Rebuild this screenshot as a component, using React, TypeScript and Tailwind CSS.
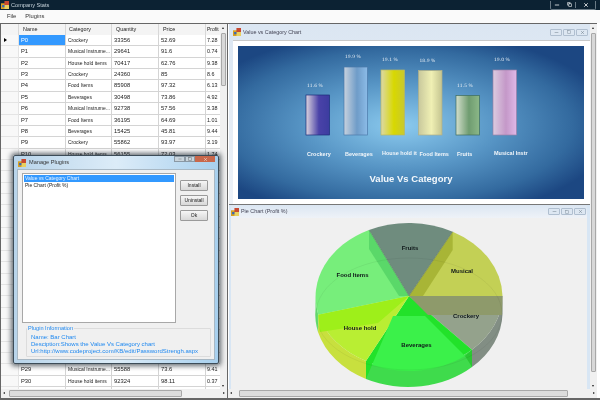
import { Copy, Minus, Square, X } from "lucide-react";

type Row = { name: string; category: string; qty: string; price: string; profit: string };

const topRows: Row[] = [
  { name: "P0", category: "Crockery", qty: "33356", price: "52.69", profit: "7.28" },
  { name: "P1", category: "Musical Instrume...", qty: "29641", price: "91.6", profit: "0.74" },
  { name: "P2", category: "House hold items", qty: "70417", price: "62.76", profit: "9.38" },
  { name: "P3", category: "Crockery", qty: "24360", price: "85", profit: "8.6" },
  { name: "P4", category: "Food Items", qty: "85908", price: "97.32", profit: "6.13" },
  { name: "P5", category: "Beverages", qty: "30498", price: "73.86", profit: "4.92" },
  { name: "P6", category: "Musical Instrume...", qty: "92738", price: "57.56", profit: "3.38" },
  { name: "P7", category: "Food Items", qty: "36195", price: "64.69", profit: "1.01" },
  { name: "P8", category: "Beverages", qty: "15425", price: "45.81", profit: "9.44" },
  { name: "P9", category: "Crockery", qty: "55862", price: "93.97", profit: "3.19" },
  { name: "P10", category: "House hold items", qty: "56155", price: "72.03", profit: "1.74" },
];

const blankRow: Row = { name: "", category: "", qty: "", price: "", profit: "" };

const bottomRows: Row[] = [
  { name: "P29", category: "Musical Instrume...", qty: "55588", price: "73.6", profit: "9.41" },
  { name: "P30", category: "House hold items", qty: "92324", price: "98.11", profit: "0.37" },
];

// rows 11-28 sit behind the dialog
const rows: Row[] = [...topRows, ...Array.from({ length: 18 }, () => blankRow), ...bottomRows, blankRow];

const bars = [
  { id: "crockery", x: 307, y: 95, label: "11.6 %", ly: 87, name: "Crockery", ny: 156, stroke: "#1c2c78", stops: ["#dcd4de", "#4a42a8", "#3c3ca0"] },
  { id: "beverages", x: 345, y: 67, label: "19.9 %", ly: 58, name: "Beverages", ny: 156, stroke: "#4a78a8", stops: ["#c8d2de", "#6f9cc8", "#8cbce8"] },
  { id: "household", x: 382, y: 70, label: "19.1 %", ly: 61, name: "House hold it", ny: 155, stroke: "#b8b860", stops: ["#dcd8a8", "#d8d800", "#c8c830"] },
  { id: "food", x: 419.5, y: 70.5, label: "18.9 %", ly: 62, name: "Food Items", ny: 156, stroke: "#b0b088", stops: ["#c8c89c", "#f0f0b4", "#c4c490"] },
  { id: "fruits", x: 457, y: 95.5, label: "11.5 %", ly: 87, name: "Fruits", ny: 156, stroke: "#3c6c5c", stops: ["#d4dfcc", "#6f9c70", "#8cb888"] },
  { id: "musical", x: 494, y: 70, label: "19.0 %", ly: 61, name: "Musical Instr", ny: 155, stroke: "#9a80a8", stops: ["#dccce0", "#c498c8", "#e0b8e8"] },
];

function AppIcon() {
  return (
    <svg width="8" height="8" viewBox="0 0 7 7" className="shrink-0">
      <rect x="0" y="2" width="3.5" height="5" fill="#d8a020" />
      <rect x="3" y="0" width="4" height="4" fill="#c84830" />
      <rect x="3" y="3.5" width="4" height="3.5" fill="#e8d060" />
      <rect x="1" y="3.5" width="2" height="2" fill="#3868b8" />
    </svg>
  );
}

function ChildControls() {
  return (
    <div className="ml-auto flex gap-[1px] text-[#5a6a7a]">
      <div className="flex h-[7px] w-[12px] items-center justify-center rounded-[1px] border border-[#b0bfd0] bg-[#dde7f2]">
        <Minus size={5} />
      </div>
      <div className="flex h-[7px] w-[12px] items-center justify-center rounded-[1px] border border-[#b0bfd0] bg-[#dde7f2]">
        <Square size={4} />
      </div>
      <div className="flex h-[7px] w-[12px] items-center justify-center rounded-[1px] border border-[#b0bfd0] bg-[#dde7f2]">
        <X size={5} />
      </div>
    </div>
  );
}

function ScrollV({ top, thumb }: { top: number; thumb: number }) {
  return (
    <div className="relative flex w-[7px] shrink-0 flex-col bg-[#f0f0f0]">
      <div className="absolute left-[1px] w-[5px] rounded-[1px] border border-[#a8a8a8] bg-[#d8d8d8]" style={{ top, height: thumb }} />
      <div className="absolute top-[3px] left-[2px] h-0 w-0 border-x-[1.5px] border-b-[2px] border-x-transparent border-b-[#222]" />
      <div className="absolute bottom-[2px] left-[2px] h-0 w-0 border-x-[1.5px] border-t-[2px] border-x-transparent border-t-[#222]" />
    </div>
  );
}

function ScrollH({ left, thumb }: { left: number; thumb: number }) {
  return (
    <div className="relative h-[9px] shrink-0 bg-[#f0f0f0]">
      <div className="absolute top-[1px] h-[7px] rounded-[1px] border border-[#a8a8a8] bg-[#dcdcdc]" style={{ left, width: thumb }} />
      <div className="absolute top-[3px] left-[2px] h-0 w-0 border-y-[1.5px] border-r-[2px] border-y-transparent border-r-[#222]" />
      <div className="absolute top-[3px] right-[2px] h-0 w-0 border-y-[1.5px] border-l-[2px] border-y-transparent border-l-[#222]" />
    </div>
  );
}

function BarChart() {
  return (
    <svg viewBox="239 46 346 153" className="block h-[153px] w-[346px]">
      <defs>
        <radialGradient id="panelBg" cx="0.47" cy="0.52" r="0.62">
          <stop offset="0" stopColor="#8ccbef" />
          <stop offset="0.45" stopColor="#5795c5" />
          <stop offset="0.8" stopColor="#336a9f" />
          <stop offset="1" stopColor="#1c4782" />
        </radialGradient>
        {bars.map((b) => (
          <linearGradient key={b.id} id={`bar-${b.id}`} x1="0" x2="1" y1="0" y2="0">
            <stop offset="0" stopColor={b.stops[0]} />
            <stop offset="0.55" stopColor={b.stops[1]} />
            <stop offset="1" stopColor={b.stops[2]} />
          </linearGradient>
        ))}
      </defs>
      <rect x="239" y="46" width="346" height="153" fill="url(#panelBg)" />
      {bars.map((b) => (
        <g key={b.id}>
          <rect x={b.x} y={b.y} width="23.5" height={135 - b.y} fill={`url(#bar-${b.id})`} stroke={b.stroke} strokeWidth="0.7" />
          <text x={b.x + 1} y={b.ly} fontSize="4.5" fill="#e8eef5" fontFamily="'DejaVu Serif', serif">{b.label}</text>
          <text x={b.x + 1} y={b.ny} fontSize="5.5" fontWeight="700" fill="#f2f6fa" fontFamily="'Liberation Sans', sans-serif">{b.name}</text>
        </g>
      ))}
      <text x="412" y="181.5" textAnchor="middle" fontSize="9.5" fontWeight="700" fill="#f4f8fc" fontFamily="'Liberation Sans', sans-serif">Value Vs Category</text>
    </svg>
  );
}

function PieChart() {
  return (
    <svg viewBox="309 219 200 169" className="block h-[169px] w-[200px]">
      {/* side walls */}
      <path d="M318.3 315.7 A93.5 74 0 0 0 366 362 L366 380 A93.5 74 0 0 1 318 333Z" fill="#c8e03e" />
      <path d="M366 362 A93.5 74 0 0 0 472 350.7 L472 368 A93.5 74 0 0 1 366 380Z" fill="#3fdb4c" />
      <path d="M472 350.7 A93.5 74 0 0 0 502.5 297 L502.5 315 A93.5 74 0 0 1 472 368Z" fill="#828e84" />
      <path d="M315.5 297 A93.5 74 0 0 0 318.3 315.7 L318 333 A93.5 74 0 0 1 315.5 310Z" fill="#66dd70" />
      {/* top wedges */}
      <path d="M409 297 L369 231 A93.5 74 0 0 1 452.7 232.7Z" fill="#6f8c7e" />
      <path d="M409 297 L452.7 232.7 A93.5 74 0 0 1 502.5 297Z" fill="#c3d055" />
      <path d="M409 297 L502.5 297 A93.5 74 0 0 1 472 350.7Z" fill="#94a28c" />
      <path d="M409 297 L472 350.7 A93.5 74 0 0 1 366 362Z" fill="#22e22a" />
      <path d="M409 297 L366 362 A93.5 74 0 0 1 318.3 315.7Z" fill="#b9ee33" />
      <path d="M409 297 L318.3 315.7 A93.5 74 0 0 1 369 231Z" fill="#77ee7b" />
      {/* inner walls seen through the top */}
      <path d="M409 297 L452.7 232.7 L452.7 251 L423 297Z" fill="#a8b536" />
      <path d="M409 297 L369 231 L369 250 L399 297Z" fill="#5ad869" />
      <path d="M409 297 L502.5 297 L502 316 L428 316Z" fill="#8e9a6b" />
      <path d="M409 297 L318.3 315.7 L320 333 L378 324Z" fill="#9eef1a" />
      <path d="M393 317 L425 317 L465 357 A93.5 74 0 0 1 372 366Z" fill="#3bf14a" />
      <path d="M366 362 L366 380 L372 366 L372 362Z" fill="#22e22a" />
      <path d="M465 357 L472 350.7 L472 368Z" fill="#2ac832" />
      {/* edges */}
      <path d="M369 231 L409 297 L452.7 232.7" fill="none" stroke="#5f7468" strokeWidth="0.5" />
      <ellipse cx="409" cy="315" rx="93" ry="56" fill="none" stroke="#000" strokeOpacity="0.1" strokeWidth="0.5" />
      <g fontSize="6" fontWeight="700" textAnchor="middle" fill="#10181a" fontFamily="'Liberation Sans', sans-serif">
        <text x="410" y="251">Fruits</text>
        <text x="462" y="274">Musical</text>
        <text x="466" y="319">Crockery</text>
        <text x="352.5" y="278">Food Items</text>
        <text x="360" y="330.5">House hold</text>
        <text x="416.5" y="348">Beverages</text>
      </g>
    </svg>
  );
}

function DataGrid() {
  const cols = "grid grid-cols-[18px_47px_46px_47px_47px_14px]";
  return (
    <div className="min-w-0 flex-1 overflow-hidden bg-white">
      <div className={`${cols} h-[11px] bg-[#f4f4f4] text-[5.4px]`}>
        <div className="border-r border-[#d8d8d8]" />
        <div className="border-r border-[#d8d8d8] pl-[4px] leading-[10px]">Name</div>
        <div className="border-r border-[#d8d8d8] pl-[3px] leading-[10px]">Category</div>
        <div className="border-r border-[#d8d8d8] pl-[4px] leading-[10px]">Quantity</div>
        <div className="border-r border-[#d8d8d8] pl-[4px] leading-[10px]">Price</div>
        <div className="pl-[1px] text-[5px] leading-[10px] whitespace-nowrap">Profit</div>
      </div>
      {rows.map((r, i) => (
        <div key={i} className={`${cols} h-[11.37px] text-[5.8px] leading-[10px]`}>
          <div className="flex items-center border-r border-b border-[#e4e4e4] bg-[#f8f8f8] pl-[3px]">
            {i === 0 && <div className="h-0 w-0 border-y-[2px] border-l-[3px] border-y-transparent border-l-black" />}
          </div>
          <div className={`border-r border-b border-[#d4d4d4] pl-[2px] ${i === 0 ? "bg-[#3399ff] text-white" : ""}`}>{r.name}</div>
          <div className="overflow-hidden border-r border-b border-[#d4d4d4] pl-[2px] text-[5px] whitespace-nowrap">{r.category}</div>
          <div className="border-r border-b border-[#d4d4d4] pl-[2px]">{r.qty}</div>
          <div className="border-r border-b border-[#d4d4d4] pl-[2px]">{r.price}</div>
          <div className="overflow-hidden border-b border-[#d4d4d4] pl-[1px] text-[5.4px]">{r.profit}</div>
        </div>
      ))}
    </div>
  );
}

function ManagePlugins() {
  return (
    <div className="absolute top-[155px] left-[13px] flex h-[209px] w-[206px] flex-col rounded-[2px] border border-[#3c4c58] bg-gradient-to-r from-[#b8d4ea] via-[#dcecf8] to-[#a8d0ee] px-[3px] pb-[3px] shadow-[0_0_5px_2px_rgba(20,30,40,0.65)]">
      <div className="flex h-[13px] shrink-0 items-center gap-[3px] pl-[1px]">
        <AppIcon />
        <span className="text-[5.6px] text-[#333]">Manage Plugins</span>
        <div className="ml-auto flex self-start text-[#444]">
          <div className="flex h-[6px] w-[11px] items-center justify-center border border-[#8a98a4] bg-[#c8d4dc]">
            <Minus size={4} />
          </div>
          <div className="flex h-[6px] w-[10px] items-center justify-center border border-[#8a98a4] bg-[#c8d4dc]">
            <Square size={4} />
          </div>
          <div className="flex h-[6px] w-[20px] items-center justify-center bg-[#c8684c] text-white">
            <X size={5} />
          </div>
        </div>
      </div>
      <div className="flex min-h-0 flex-1 flex-col border border-[#a8b8c4] bg-[#f0f0f0] px-[4px] pt-[3px] pb-[2px] text-[5px]">
        <div className="flex h-[150px] shrink-0 gap-[3px]">
          <div className="w-[154px] border border-[#a8a8a8] bg-white p-[1px]">
            <div className="h-[7px] bg-[#3399ff] pl-[1px] leading-[7px] text-[#e8f4ff]">Value vs Category Chart</div>
            <div className="pl-[1px] leading-[7px]">Pie Chart (Profit %)</div>
          </div>
          <div className="flex flex-1 flex-col gap-[4px] pt-[7px] pr-[2px] pl-[1px]">
            {["Install", "Uninstall", "Ok"].map((label) => (
              <div key={label} className="flex h-[11px] items-center justify-center rounded-[1px] border border-[#9a9a9a] bg-gradient-to-b from-[#f6f6f6] to-[#d8d8d8]">
                {label}
              </div>
            ))}
          </div>
        </div>
        <div className="relative mt-[5px] -mr-[1px] ml-[4px] flex-1 rounded-[1px] border border-[#dcdcdc] pt-[5px] pl-[4px] text-[6px] leading-[6.8px] text-[#1e88f0]">
          <div className="absolute -top-[4px] left-[0px] bg-[#f0f0f0] px-[1px] text-[5.6px]">Plugin Information</div>
          <div>Name: Bar Chart</div>
          <div>Desciption:Shows the Value Vs Category chart</div>
          <div>Url:http://www.codeproject.com/KB/edit/PasswordStrengh.aspx</div>
        </div>
      </div>
    </div>
  );
}

export default function App() {
  return (
    <div className="relative flex h-[400px] w-[600px] flex-col overflow-hidden bg-white font-['Liberation_Sans',sans-serif] text-[6px] text-[#1c1c1c] blur-[0.3px]">
      {/* main title bar */}
      <div className="flex h-[10px] shrink-0 items-center gap-[2px] bg-[#0c2233] pl-[1px]">
        <AppIcon />
        <span className="text-[5.6px] text-[#c8d4dc]">Company Stats</span>
        <div className="mr-[4px] ml-auto flex h-[9px] items-center rounded-b-[2px] border border-t-0 border-[#6a7a86] text-white">
          <div className="flex w-[12px] justify-center"><Minus size={6} strokeWidth={3} /></div>
          <div className="flex w-[12px] justify-center"><Copy size={5} strokeWidth={3} /></div>
          <div className="flex w-[20px] justify-center border-l border-[#6a7a86]"><X size={6} strokeWidth={3} /></div>
        </div>
      </div>

      {/* menu */}
      <div className="flex h-[13px] shrink-0 items-center gap-[9px] bg-[#fafafa] pl-[7px] text-[5.8px] text-[#333]">
        <span>File</span>
        <span>Plugins</span>
      </div>

      <div className="flex min-h-0 flex-1">
        {/* data grid side */}
        <div className="flex w-[228px] shrink-0 flex-col border-t border-r border-l border-[#666]">
          <div className="flex min-h-0 flex-1">
            <DataGrid />
            <ScrollV top={9} thumb={53} />
          </div>
          <ScrollH left={8} thumb={173} />
        </div>

        {/* child windows side */}
        <div className="flex w-[369px] shrink-0 flex-col border-t border-[#666]">
          <div className="flex min-h-0 flex-1 pl-[1px]">
            <div className="flex min-w-0 flex-1 flex-col">
              <div className="flex h-[181px] shrink-0 flex-col border-b border-[#777] bg-gradient-to-b from-[#dbe6f2] to-[#edf2f8] pl-[4px]">
                <div className="flex h-[16px] shrink-0 items-center gap-[2px] pr-[2px] text-[5.4px] text-[#445]">
                  <AppIcon />
                  <span>Value vs Category Chart</span>
                  <ChildControls />
                </div>
                <div className="flex-1 border-t border-[#c8c8c8] bg-white pt-[5px] pl-[5px]">
                  <BarChart />
                </div>
              </div>
              <div className="flex min-h-0 flex-1 flex-col border-r-[3px] border-l-[2px] border-[#d8e6f4] bg-[#f0f0f0]">
                <div className="flex h-[13px] shrink-0 items-center gap-[2px] bg-gradient-to-b from-[#dbe6f2] to-[#eef2f8] pr-[1px] text-[5.4px] text-[#445]">
                  <AppIcon />
                  <span>Pie Chart (Profit %)</span>
                  <ChildControls />
                </div>
                <div className="flex min-h-0 flex-1 justify-center">
                  <PieChart />
                </div>
              </div>
            </div>
            <ScrollV top={9} thumb={339} />
          </div>
          <ScrollH left={11} thumb={329} />
        </div>
      </div>
      <div className="h-[2px] shrink-0 bg-[#666]" />

      <ManagePlugins />
    </div>
  );
}
